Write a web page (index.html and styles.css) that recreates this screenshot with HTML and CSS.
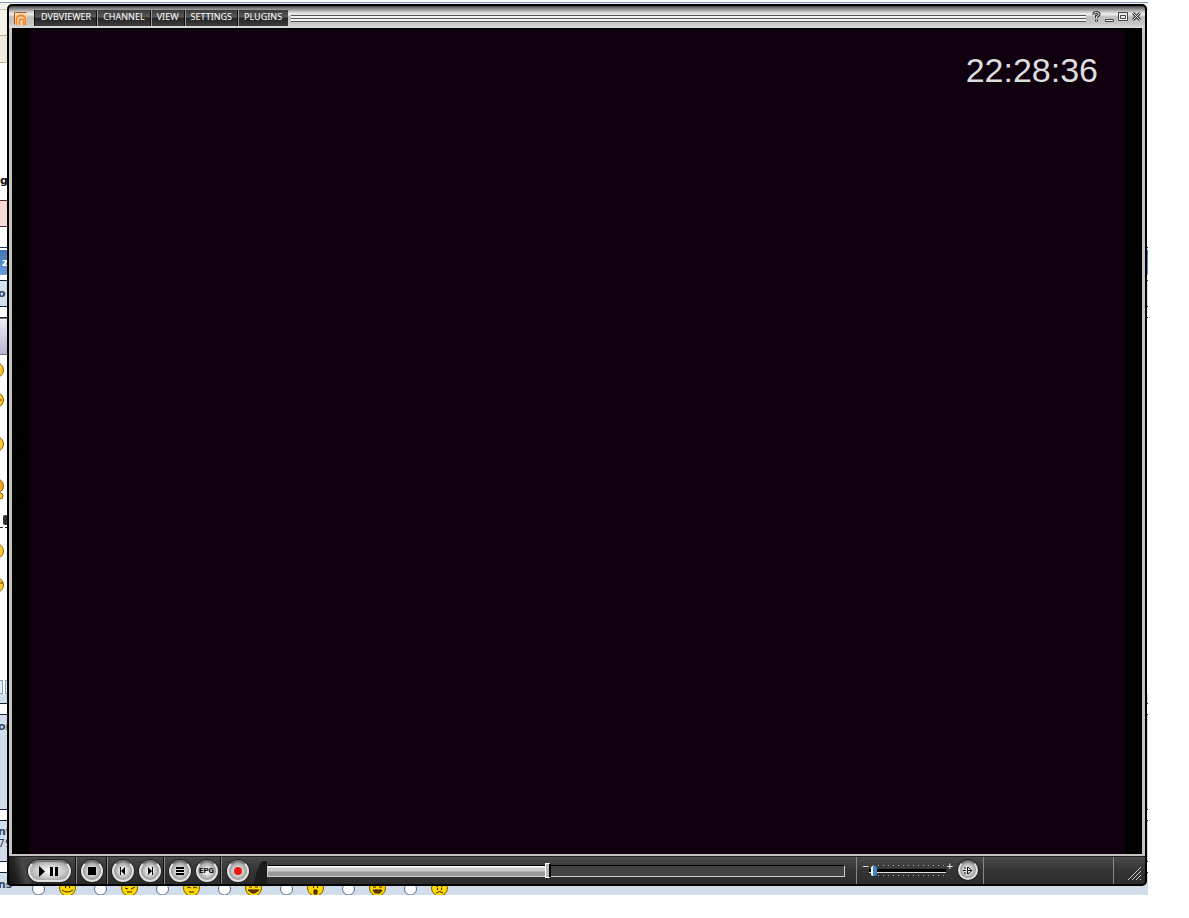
FILE: index.html
```html
<!DOCTYPE html>
<html lang="en">
<head>
<meta charset="utf-8">
<title>DVBViewer</title>
<link rel="stylesheet" href="styles.css">
</head>
<body>
<div class="page">
  <div class="strip">
    <div class="s-top"></div>
    <div class="s-cream"></div>
    <div class="s-cream s-cream2"></div>
    <div class="s-text"><b>g</b></div>
    <div class="s-pink"></div>
    <div class="s-gap"></div>
    <div class="s-head">z</div>
    <div class="s-row">o</div>
    <div class="s-thin"></div>
    <div class="s-tool"></div>
    <svg class="s-smileys" width="8" height="325" viewBox="0 0 8 325">
      <g fill="#fcc62c" stroke="#8a6508">
        <circle cx="-4" cy="15" r="7.500"/><circle cx="-4" cy="45" r="7.500"/><circle cx="-4" cy="89" r="7.500"/>
        <circle cx="-4" cy="131" r="7.500" fill="#f8a31c"/><circle cx="0" cy="141" r="3"/>
        <circle cx="-4" cy="196" r="7.500"/><circle cx="-4" cy="230" r="7.500"/>
      </g>
      <rect x="3" y="160" width="5" height="10" rx="2" fill="#333"/>
      <path d="M0 172.500h8" stroke="#333" stroke-dasharray="3 2"/>
      <path d="M0 45h2M0 228h3" stroke="#6b4800"/>
    </svg>
    <div class="s-buttons"><i></i><i></i></div>
    <div class="s-blue s-b1"></div>
    <div class="s-white"></div>
    <div class="s-blue s-b2">or</div>
    <div class="s-white"></div>
    <div class="s-blue s-b3">nt<small>79</small></div>
    <div class="s-white"></div>
  </div>
  <div class="smiley-bar">
    <span class="ns">ns</span>
    <svg class="faces" width="430" height="22" viewBox="30 873 430 22">
      <g fill="#fff" stroke="#52708f">
        <circle cx="38.500" cy="889" r="6"/><circle cx="100.500" cy="889" r="6"/><circle cx="162.500" cy="889" r="6"/><circle cx="224.500" cy="889" r="6"/><circle cx="286.500" cy="889" r="6"/><circle cx="348.500" cy="889" r="6"/><circle cx="410.500" cy="889" r="6"/>
      </g>
      <g fill="#ffd800" stroke="#7b6100">
        <circle cx="67.500" cy="888" r="8"/><circle cx="129.500" cy="888" r="8"/><circle cx="191.500" cy="888" r="8"/><circle cx="253.500" cy="888" r="8"/><circle cx="315.500" cy="888" r="8"/><circle cx="377.500" cy="888" r="8"/><circle cx="439.500" cy="888" r="8"/>
      </g>
      <g fill="none" stroke="#392500">
        <path d="M65.500 885v3M69.500 885v3M62 890q5 4 11 0M125 888l3 1M131 889l4-2M127 892h5M187 888q2-2 4 0M193 888q2-2 4 0M189 892h5M249 887h3M255 887h3M313.500 885v3M317.500 885v3M373 887h3M379 887h3M435 885l3 2M444 885l-3 2M437.500 888v2M441.500 888v2M436 893q4-3 7 0"/>
        <path fill="#713600" d="M248 890h11l-4 3h-3zM314 890h3v4h-3zM373 890h9l-2 3h-5z"/>
      </g>
    </svg>
  </div>
</div>

<main class="window">
  <header class="titlebar">
    <svg class="logo" width="13" height="13" viewBox="0 0 13 13"><path fill="#fbd9b4" d="M0 0h13v13H0z"/><path d="M.5 12.500V.5h12" fill="none" stroke="#a45d29"/><path d="M2.500 13V8q0-4.500 4.500-4.500T11.500 8v5M5.500 13V9q0-2 2-2t2 2v4" fill="none" stroke="#f18a35" stroke-width="1.800"/></svg>
    <nav class="menu">
      <button>DVBVIEWER</button><button>CHANNEL</button><button>VIEW</button><button>SETTINGS</button><button>PLUGINS</button>
    </nav>
    <div class="grip"></div>
    <div class="winbtns">
      <button aria-label="Help"><svg width="9" height="11" viewBox="0 0 9 11"><path d="M2 4V2.500Q2 1.500 4.500 1.500T7 3.500Q7 4.500 4.500 5.500V7M4.500 8.500v2" fill="none" stroke="#333" stroke-width="3"/><path d="M2 4V2.500Q2 1.500 4.500 1.500T7 3.500Q7 4.500 4.500 5.500V7M4.500 9v1" fill="none" stroke="#eee"/></svg></button>
      <button aria-label="Minimize"><svg width="9" height="11" viewBox="0 0 9 11"><path d="M.5 8.500h8v2h-8z" fill="#eee" stroke="#444"/></svg></button>
      <button aria-label="Maximize"><svg width="10" height="11" viewBox="0 0 10 11"><path d="M.5 1.500h9v8h-9zM2.500 4.500h5v3h-5z" fill="#eee" stroke="#444"/></svg></button>
      <button aria-label="Close"><svg width="9" height="11" viewBox="0 0 9 11"><path d="M1 2l7 7M8 2L1 9" stroke="#333" stroke-width="2.800"/><path d="M1 2l7 7M8 2L1 9" stroke="#eee"/></svg></button>
    </div>
  </header>
  <section class="video"><div class="picture"><time class="clock">22:28:36</time></div></section>
  <footer class="controls">
    <div class="transport">
      <div class="group g-play"><button class="play" aria-label="Play or pause"><svg width="22" height="11" viewBox="0 0 22 11"><path d="M1 0l6 5.500L1 11zM12 1h3v9h-3zM17 1h3v9h-3z"/></svg></button></div>
      <div class="group g-stop"><button class="round" aria-label="Stop"><svg width="8" height="8" viewBox="0 0 8 8"><path d="M0 0h8v8H0z"/></svg></button></div>
      <div class="group g-skip"><button class="round" aria-label="Previous"><svg width="8" height="8" viewBox="0 0 8 8"><path d="M1 0h1v8H1zM6 0v8L2 4z"/></svg></button><button class="round" aria-label="Next"><svg width="8" height="8" viewBox="0 0 8 8"><path d="M6 0h1v8H6zM2 0v8l4-4z"/></svg></button></div>
      <div class="group g-list"><button class="round" aria-label="List"><svg width="8" height="8" viewBox="0 0 8 8"><path d="M0 0h8v2H0zM0 3h8v2H0zM0 6h8v2H0z"/></svg></button><button class="round" aria-label="EPG"><span class="epg">EPG</span></button></div>
      <div class="group g-rec"><button class="round" aria-label="Record"><svg width="8" height="8" viewBox="0 0 8 8"><circle cx="4" cy="4" r="4" fill="#f31414"/></svg></button></div>
    </div>
    <svg class="curve" width="13" height="26" viewBox="0 0 13 26"><path fill="#1c1c1c" d="M0 26Q4 5 9 3h4v23z"/></svg>
    <input class="seek" type="range" min="0" max="1000" value="486" aria-label="Position">
    <div class="volume">
      <span>−</span>
      <div class="volbox"><input type="range" min="0" max="100" value="3" aria-label="Volume"></div>
      <span>+</span>
      <button class="round mute" aria-label="Mute"><svg width="10" height="9" viewBox="0 0 10 9"><path d="M1 2h2M0 4.500h3M1 7h2M4.500 1v7M5 1l4 3.500L5 8M5 4.500h4" fill="none" stroke="#111"/></svg></button>
    </div>
    <div class="status"></div>
    <div class="corner"><svg width="14" height="14" viewBox="0 0 14 14"><path d="M0 13L13 0M4 13l9-9M8 13l5-5M12 13l1-1" stroke="#ccc"/></svg></div>
  </footer>
</main>
</body>
</html>
```
FILE: styles.css
```css
* { box-sizing: border-box; }
html, body { height: 100%; }
body { margin: 0; background: #fff; position: relative; overflow: hidden; font-family: "DejaVu Sans", Verdana, sans-serif; }
button { border: 0; padding: 0; margin: 0; background: none; font: inherit; color: inherit; }
svg { display: block; flex: none; }

.page { height: 100%; padding: 0 41px 23px 0; display: flex; flex-direction: column; }
.strip { width: 100%; flex: 1; min-height: 0; overflow: hidden; display: flex; flex-direction: column; font-size: 11px; color: #33445c; line-height: 12px; }
.strip > * { flex: none; }
.s-top { height: 10px; border-bottom: 1px solid #c9c4b0; background: linear-gradient(#fff 2px, #8196b4 2px, #8196b4 3px, #f4f3ec 3px); }
.s-cream { width: 8px; height: 26px; background: #f5f3e8; border-bottom: 1px solid #b9b49f; }
.s-cream2 { height: 27px; background: #efecdc; }
.s-text { width: 8px; height: 137px; padding-top: 112px; color: #111; overflow: hidden; }
.s-pink { width: 8px; height: 27px; background: #f7d9d8; border: solid #5b2b35; border-width: 1px 0; }
.s-gap { height: 20px; }
.s-head { height: 28px; border-top: 1px solid #18345f; background: linear-gradient(#fff 2px, #4374b8 2px, #6c9bd6); color: #fff; padding: 9px 0 0 2px; font-weight: bold; }
.s-row { height: 27px; margin-top: 5px; padding-top: 7px; background: #d4e0f0; border: solid #14243d; border-width: 1px 0; }
.s-thin { height: 11px; border-bottom: 1px solid #14243d; }
.s-tool { width: 8px; height: 37px; background: linear-gradient(#eeeef5, #b7b5d2); border: solid #777; border-width: 1px 0; }
.s-smileys { overflow: hidden; }
.s-buttons { display: flex; gap: 2px; height: 14px; width: 8px; overflow: hidden; }
.s-buttons i { flex: none; width: 3px; border: solid #819ec4; border-width: 1px 1px 1px 0; background: #e6eefb; }
.s-buttons i + i { width: 5px; border-left-width: 1px; }
.s-blue { background: #d2ddec; border-bottom: 1px solid #14243d; overflow: hidden; }
.s-white { height: 11px; background: #fff; border-bottom: 1px solid #14243d; flex: none; }
.s-b1 { height: 10px; }
.s-b2 { height: 95px; padding-top: 6px; }
.s-b3 { height: 41px; padding-top: 5px; }
.s-b2, .s-b3, .s-row { text-indent: -2px; font-weight: bold; }
.s-b3 small { display: block; font-size: 11px; font-weight: normal; }
.smiley-bar { height: 22px; flex: none; background: #d2ddec; display: flex; color: #33445c; font-size: 11px; font-weight: bold; line-height: 12px; }
.ns { width: 30px; padding-top: 6px; text-indent: -2px; }

.window { position: absolute; inset: 4px 42px 32px 7px; border: 2px solid #000; border-radius: 5px; background: #000; display: flex; flex-direction: column; overflow: hidden; }
.titlebar { height: 22px; flex: none; display: flex; align-items: center; padding: 0 4px 0 5px; background: linear-gradient(#444 0, #777 2px, #b8b8b8 5px, #f0f0f0 8px, #bdbdbd 11px, #c6c6c6 18px, #ddd 22px); }
.menu { display: flex; height: 16px; margin: 2px 3px 0 8px; background: linear-gradient(#3a3a3a, #5b5b5b 7px, #252525 8px, #3c3c3c); color: #fff; font: 9px/14px "Noto Sans", sans-serif; }
.menu button { padding: 0 6px 2px 5px; border-left: 1px solid #999; box-shadow: -1px 0 #111; white-space: nowrap; }
.menu button:first-child { border-left: 0; padding-left: 6px; }
.grip { flex: 1; height: 7px; margin-top: 3px; background: repeating-linear-gradient(#555 0 1px, #f3f3f3 1px 3px); }
.logo { margin-top: 2px; }
.winbtns { display: flex; gap: 4px; margin-left: 6px; }
.winbtns svg { margin-bottom: 1px; }

.video { flex: 1; min-height: 0; display: flex; background: #000; border: solid #c4c4c0; border-width: 0 3px 2px; padding: 0 17px; }
.picture { flex: 1; background: #10000f; text-align: right; padding: 21px 27px 0 0; margin-top: 2px; }
.clock { display: block; font: 34px/38px "Liberation Sans", Arial, sans-serif; color: #ddd; }

.controls { height: 28px; flex: none; display: flex; align-items: stretch; border-top: 1px solid #222; background: linear-gradient(#4b4b4b, #343434 50%, #2c2c2c); }
.transport { display: flex; padding-left: 13px; background: linear-gradient(75deg, #111 0, #242424 10px, #484848 18px, transparent 24px); }
.group { display: flex; align-items: center; justify-content: center; gap: 5px; border-right: 1px solid #888; box-shadow: inset -1px 0 #111; padding-top: 1px; }
.g-play { width: 55px; }
.g-stop { width: 31px; }
.g-skip { width: 57px; }
.g-list { width: 57px; }
.g-rec { width: 32px; border: 0; box-shadow: none; }
.play, .round { display: grid; place-items: center; flex: none; border: 2px solid #e2e2e2; border-top-color: #777; background: radial-gradient(#fff, #ccc 50%, #888); box-shadow: 0 0 0 1px #222; }
.play { width: 43px; height: 22px; border-radius: 11px; }
.round { width: 22px; height: 22px; border-radius: 50%; background: radial-gradient(#eee 20%, #aaa 60%, #666); color: #000; }
.epg { font: bold 8px/10px Roboto, sans-serif; }
.curve { align-self: flex-end; }
input[type=range] { appearance: none; -webkit-appearance: none; margin: 0; display: block; background: none; }
.seek { flex: 1; min-width: 0; height: 15px; align-self: center; }
.seek::-webkit-slider-runnable-track { height: 12px; border: 1px solid #ccc; border-top-color: #000; background: linear-gradient(90deg, transparent 48.5%, #444 48.5%), linear-gradient(#fff 1px, #ccc 2px 5px, #999 6px); }
.seek::-webkit-slider-thumb { -webkit-appearance: none; width: 6px; height: 15px; margin-top: -3px; background: #bbb; border: 1px solid #fff; border-right: 2px solid #000; }
.volume { width: 128px; margin-left: 11px; display: flex; padding: 0 5px 0 5px; border: solid #888; border-width: 0 1px; color: #fff; font: 9px/10px "DejaVu Sans", sans-serif; }
.volume span { width: 7px; padding-top: 4px; }
.volbox { width: 77px; height: 13px; margin-top: 7px; background: radial-gradient(circle, #aaa 0 1px, transparent 1px) 2px 0/5px 3px repeat-x, radial-gradient(circle, #aaa 0 1px, transparent 1px) 2px 10px/5px 3px repeat-x; }
.volbox input { width: 77px; height: 13px; }
.volbox input::-webkit-slider-runnable-track { height: 4px; background: #000; border-bottom: 1px solid #ddd; }
.volbox input::-webkit-slider-thumb { -webkit-appearance: none; width: 6px; height: 10px; margin-top: -3px; background: linear-gradient(90deg, #fff 2px, #3e86c4 2px); border-radius: 2px; }
.mute { width: 20px; height: 20px; margin: 3px 0 0 5px; }
.status { width: 130px; border-right: 1px solid #888; }
.corner { width: 31px; padding: 10px 0 0 14px; }
```
